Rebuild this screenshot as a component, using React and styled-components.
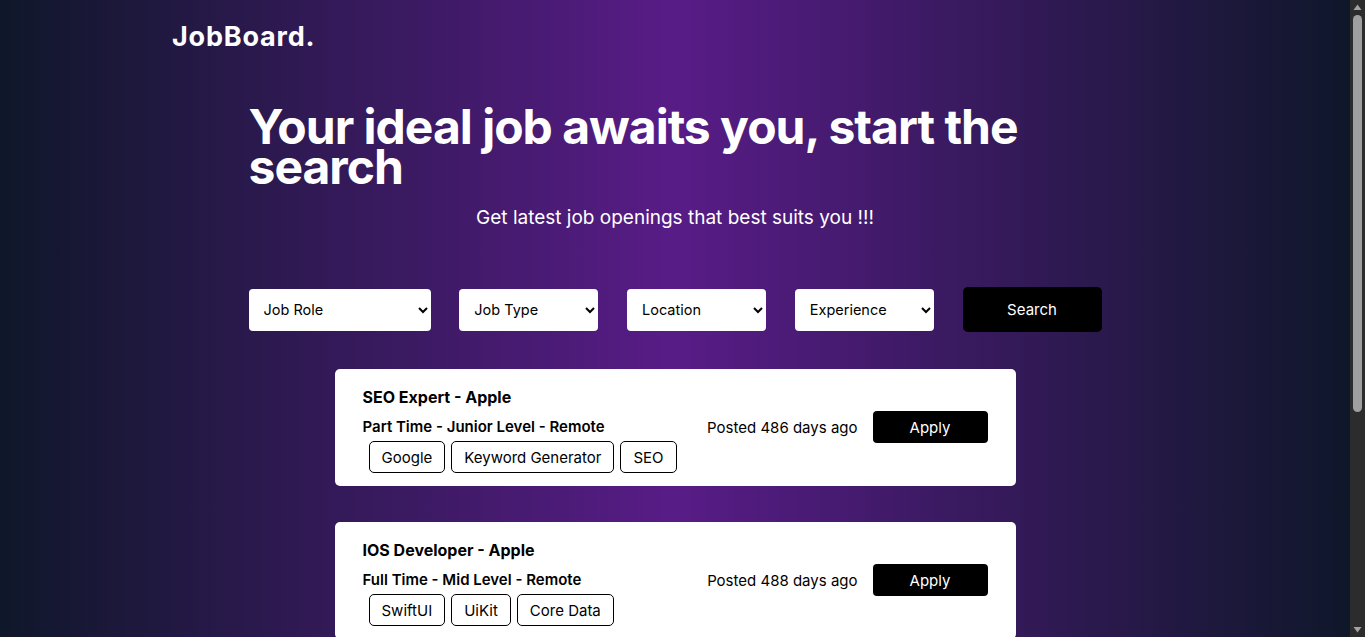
import styled, { createGlobalStyle } from "styled-components";

const GlobalStyle = createGlobalStyle`
    html, body {
        margin: 0;
        padding: 0;
    }
    body {
        font-family: "Inter", "Noto Sans", sans-serif;
        background: #0f172a;
    }
    * {
        box-sizing: border-box;
    }
`;

const jobs = [
    {
        id: 1,
        title: "SEO Expert - Apple",
        info: "Part Time - Junior Level - Remote",
        tags: ["Google", "Keyword Generator", "SEO"],
        posted: 486,
    },
    {
        id: 2,
        title: "IOS Developer - Apple",
        info: "Full Time - Mid Level - Remote",
        tags: ["SwiftUI", "UiKit", "Core Data"],
        posted: 488,
    },
    {
        id: 3,
        title: "Frontend Developer - Google",
        info: "Full Time - Senior Level - In-Office",
        tags: ["React", "Tailwind", "TypeScript"],
        posted: 490,
    },
    {
        id: 4,
        title: "Data Analyst - Meta",
        info: "Part Time - Junior Level - Hybrid",
        tags: ["Python", "SQL"],
        posted: 495,
    },
];

export default function App() {
    return (
        <Page>
            <GlobalStyle />
            <Header>
                <Logo>JobBoard.</Logo>
            </Header>
            <Main>
                <Title>Your ideal job awaits you, start the search</Title>
                <Subtitle>Get latest job openings that best suits you !!!</Subtitle>
                <Filters>
                    <Select $w={182} defaultValue="">
                        <option value="" disabled hidden>
                            Job Role
                        </option>
                        <option>iOS Developer</option>
                        <option>Frontend Developer</option>
                        <option>SEO Expert</option>
                    </Select>
                    <Select $w={139} defaultValue="">
                        <option value="" disabled hidden>
                            Job Type
                        </option>
                        <option>Full Time</option>
                        <option>Part Time</option>
                    </Select>
                    <Select $w={139} defaultValue="">
                        <option value="" disabled hidden>
                            Location
                        </option>
                        <option>Remote</option>
                        <option>In-Office</option>
                    </Select>
                    <Select $w={139} defaultValue="">
                        <option value="" disabled hidden>
                            Experience
                        </option>
                        <option>Junior Level</option>
                        <option>Mid Level</option>
                        <option>Senior Level</option>
                    </Select>
                    <SearchButton>Search</SearchButton>
                </Filters>
            </Main>
            <JobList>
                {jobs.map((job) => (
                    <Card key={job.id}>
                        <div>
                            <JobTitle>{job.title}</JobTitle>
                            <JobInfo>{job.info}</JobInfo>
                            <Tags>
                                {job.tags.map((t) => (
                                    <Tag key={t}>{t}</Tag>
                                ))}
                            </Tags>
                        </div>
                        <CardRight>
                            <Posted>Posted {job.posted} days ago</Posted>
                            <ApplyButton>Apply</ApplyButton>
                        </CardRight>
                    </Card>
                ))}
            </JobList>
            <Scrollbar>
                <svg width="15" height="15" viewBox="0 0 15 15">
                    <path d="M3.5 10 L7.5 4.5 L11.5 10 Z" fill="#a3a3a3" />
                </svg>
                <Thumb />
                <svg
                    width="15"
                    height="15"
                    viewBox="0 0 15 15"
                    style={{ position: "absolute", bottom: 0, left: 0 }}
                >
                    <path d="M3.5 5 L7.5 10.5 L11.5 5 Z" fill="#a3a3a3" />
                </svg>
            </Scrollbar>
        </Page>
    );
}

const Page = styled.div`
    margin-right: 15px;
    min-height: 100vh;
    padding-bottom: 40px;
    background: linear-gradient(to right, #0f172a, #581c87, #0f172a);
`;

const Header = styled.header`
    max-width: 1006px;
    margin: 0 auto;
    padding-top: 21px;
    height: 60px;
`;

const Logo = styled.div`
    color: white;
    font-size: 27px;
    line-height: 32px;
    font-weight: 700;
    letter-spacing: 0.8px;
`;

const Main = styled.section`
    width: 853px;
    margin: 0 auto;
    padding-top: 47px;
`;

const Title = styled.h1`
    margin: 0;
    color: white;
    font-size: 48px;
    line-height: 40px;
    font-weight: 700;
    letter-spacing: -1px;
`;

const Subtitle = styled.p`
    margin: 19px 0 0;
    text-align: center;
    color: white;
    font-size: 19px;
`;

const Filters = styled.div`
    display: flex;
    align-items: center;
    justify-content: space-between;
    margin-top: 58px;
`;

const Select = styled.select`
    width: ${(p) => p.$w}px;
    height: 42px;
    padding: 0 11px;
    border: none;
    border-radius: 4px;
    background: white;
    color: black;
    font-family: inherit;
    font-size: 14.5px;
`;

const SearchButton = styled.button`
    width: 139px;
    height: 45px;
    border: none;
    border-radius: 5px;
    background: black;
    color: white;
    font-family: inherit;
    font-size: 15px;
`;

const JobList = styled.div`
    width: 681px;
    margin: 37px auto 0;
    display: flex;
    flex-direction: column;
    gap: 36px;
`;

const Card = styled.div`
    background: white;
    border-radius: 5px;
    padding: 16px 28px 13px;
    display: flex;
    align-items: center;
    justify-content: space-between;
`;

const JobTitle = styled.div`
    font-size: 16px;
    line-height: 24px;
    font-weight: 700;
    color: black;
`;

const JobInfo = styled.div`
    margin-top: 8px;
    font-size: 15px;
    line-height: 20px;
    font-weight: 600;
    color: black;
`;

const Tags = styled.div`
    display: flex;
    gap: 6px;
    margin: 4px 0 0 6px;
`;

const Tag = styled.span`
    display: flex;
    align-items: center;
    height: 32px;
    padding: 0 12px;
    border: 1px solid black;
    border-radius: 5px;
    font-size: 15px;
    color: black;
`;

const CardRight = styled.div`
    display: flex;
    align-items: center;
    gap: 15px;
    margin-bottom: 4px;
`;

const Posted = styled.span`
    font-size: 15px;
    color: black;
`;

const ApplyButton = styled.button`
    width: 115px;
    height: 32px;
    border: none;
    border-radius: 4px;
    background: black;
    color: white;
    font-family: inherit;
    font-size: 15px;
`;

const Scrollbar = styled.div`
    position: fixed;
    top: 0;
    right: 0;
    width: 15px;
    height: 100vh;
    background: #2c2c2c;
    svg {
        display: block;
    }
`;

const Thumb = styled.div`
    margin: 0 auto;
    width: 9px;
    height: 397px;
    border-radius: 5px;
    background: #9f9f9f;
`;
